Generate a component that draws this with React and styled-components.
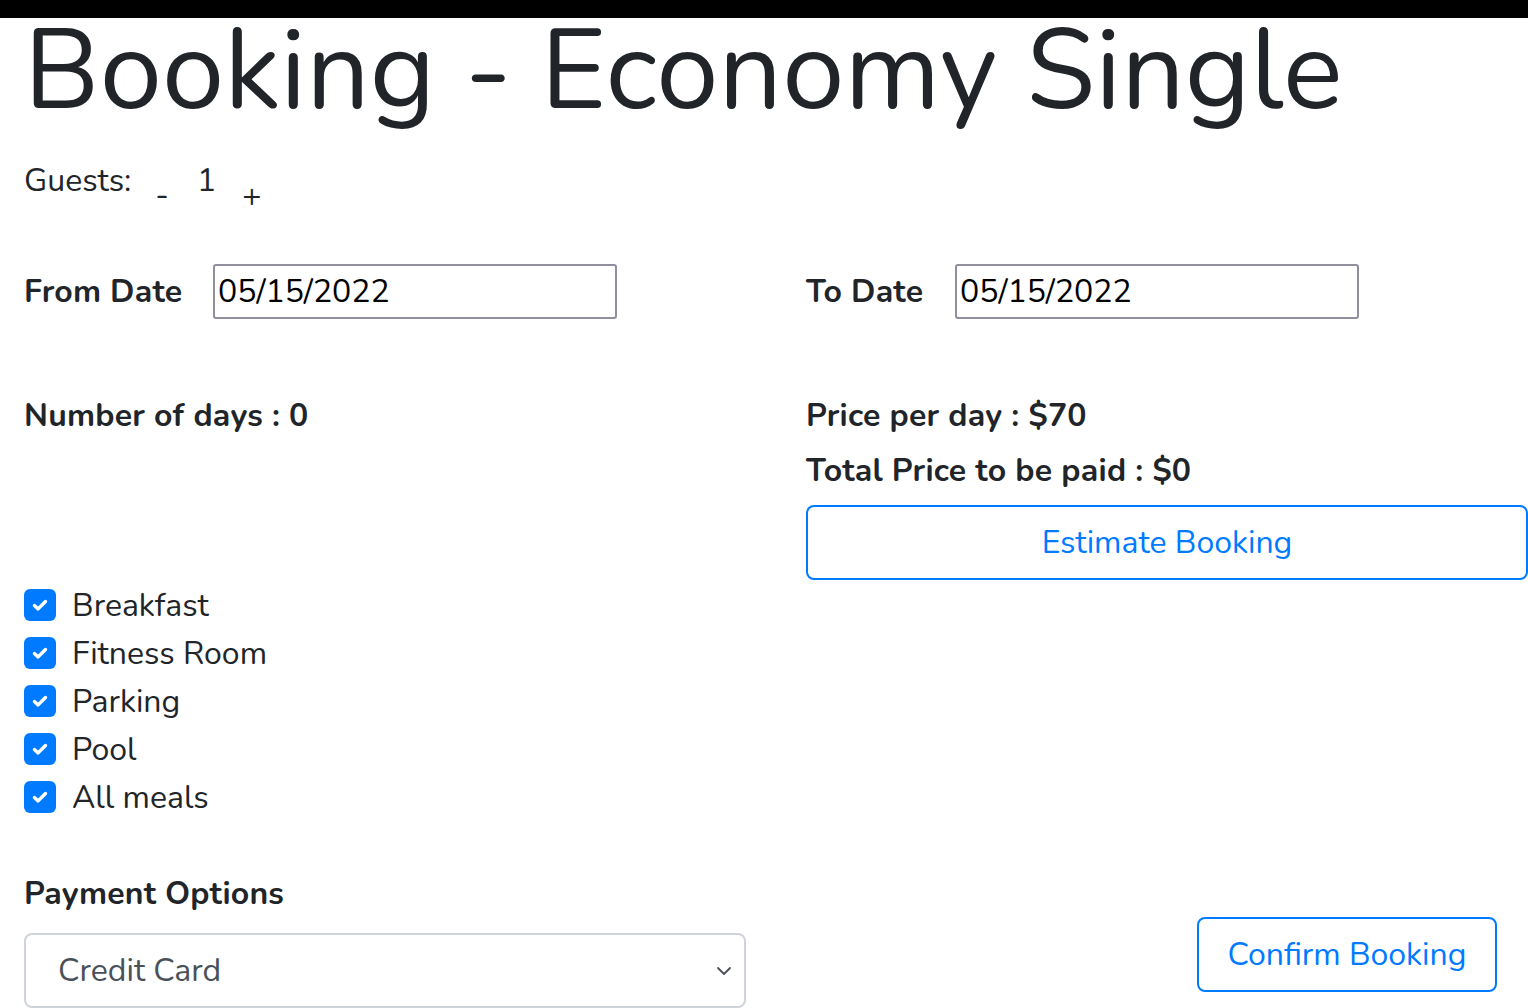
import React from "react";
import styled, { createGlobalStyle } from "styled-components";

const Global = createGlobalStyle`
  html, body { margin: 0; padding: 0; background: #fff; }
  body {
    font-family: "Nunito", "Lato", "Noto Sans", sans-serif;
    font-size: 32px;
    line-height: 48px;
    color: #212529;
    overflow: hidden;
  }
  * { box-sizing: border-box; }
`;

const TopBar = styled.div`
  height: 18px;
  background: #000;
`;

const Page = styled.main`
  padding-left: 24px;
  width: 1528px;
`;

const Title = styled.h1`
  margin: 0;
  font-size: 112px;
  font-weight: 400;
  line-height: 108px;
  white-space: nowrap;
`;

const GuestsRow = styled.div`
  display: flex;
  align-items: flex-start;
  margin-top: 31px;
`;

const Text = styled.span`
  font-weight: 400;
  white-space: nowrap;
`;

const StepButton = styled.button`
  font: inherit;
  color: #212529;
  background: transparent;
  border: none;
  padding: 0 14px;
  margin-top: 15px;
  margin-left: ${(p) => p.$ml || 0}px;
  line-height: 48px;
  cursor: pointer;
`;

const Count = styled.span`
  padding: 0 12px 0 14px;
`;

const TwoCol = styled.div`
  display: grid;
  grid-template-columns: 722px 722px;
  column-gap: 60px;
  margin-top: ${(p) => p.$mt}px;
`;

const Field = styled.div`
  display: flex;
  align-items: flex-start;
`;

const FieldLabel = styled.label`
  width: ${(p) => p.$w}px;
  font-weight: 700;
  line-height: 56px;
  letter-spacing: 0.2px;
  white-space: nowrap;
`;

const DateInput = styled.input`
  width: 404px;
  height: 55px;
  border: 2px solid #8f8f9d;
  border-radius: 3px;
  padding: 0 0 0 3px;
  font: inherit;
  color: #000;
  background: #fff;
`;

const Stack = styled.div`
  display: flex;
  flex-direction: column;
`;

const Line = styled.p`
  margin: 0 0 7px;
  font-weight: 700;
  letter-spacing: 0.25px;
  white-space: nowrap;
`;

const OutlineButton = styled.button`
  font: inherit;
  color: #007bff;
  background: #fff;
  border: 2px solid #007bff;
  border-radius: 8px;
  height: 75px;
  width: ${(p) => p.$w || "100%"};
  padding: 0 28px;
  margin-top: ${(p) => p.$mt || 0}px;
  margin-left: ${(p) => p.$ml || 0}px;
  cursor: pointer;
  white-space: nowrap;
`;

const CheckList = styled.ul`
  list-style: none;
  margin: 1px 0 0;
  padding: 0;
`;

const CheckItem = styled.li`
  display: flex;
  align-items: center;
  height: 48px;
  gap: 16px;
`;

const Box = styled.span`
  display: inline-flex;
  align-items: center;
  justify-content: center;
  width: 32px;
  height: 32px;
  border-radius: 6px;
  background: #007bff;
  flex: none;
`;

const CheckText = styled.span`
  white-space: nowrap;
  padding-top: 2px;
`;

const PaymentRow = styled.div`
  display: grid;
  grid-template-columns: 722px 722px;
  column-gap: 60px;
  margin-top: 49px;
`;

const SectionLabel = styled.div`
  font-weight: 700;
  letter-spacing: 0.2px;
  margin-bottom: 15px;
`;

const SelectWrap = styled.div`
  position: relative;
  width: 722px;
  height: 75px;
`;

const Select = styled.select`
  appearance: none;
  -webkit-appearance: none;
  width: 100%;
  height: 100%;
  border: 2px solid #ced4da;
  border-radius: 8px;
  padding: 0 0 0 32px;
  font: inherit;
  color: #495057;
  background: #fff;
`;

const Chevron = styled.svg`
  position: absolute;
  right: 14px;
  top: 30px;
  pointer-events: none;
`;

const Check = () => (
  <svg width="20" height="20" viewBox="0 0 20 20" fill="none">
    <path d="M4.5 10.5l3.6 3.4L15.5 6.5" stroke="#fff" strokeWidth="3.4" strokeLinecap="round" strokeLinejoin="round" />
  </svg>
);

const extras = ["Breakfast", "Fitness Room", "Parking", "Pool", "All meals"];

export default function App() {
  return (
    <>
      <Global />
      <TopBar />
      <Page>
        <Title>Booking - Economy Single</Title>
        <GuestsRow>
          <Text>Guests:</Text>
          <StepButton $ml={10}>-</StepButton>
          <Count>1</Count>
          <StepButton>+</StepButton>
        </GuestsRow>

        <TwoCol $mt={44}>
          <Field>
            <FieldLabel $w={189}>From Date</FieldLabel>
            <DateInput type="text" defaultValue="05/15/2022" />
          </Field>
          <Field>
            <FieldLabel $w={149}>To Date</FieldLabel>
            <DateInput type="text" defaultValue="05/15/2022" />
          </Field>
        </TwoCol>

        <TwoCol $mt={72}>
          <Stack>
            <Line>Number of days : 0</Line>
          </Stack>
          <Stack>
            <Line>Price per day : $70</Line>
            <Line>Total Price to be paid : $0</Line>
            <OutlineButton $mt={3}>Estimate Booking</OutlineButton>
          </Stack>
        </TwoCol>

        <CheckList>
          {extras.map((e) => (
            <CheckItem key={e}>
              <Box>
                <Check />
              </Box>
              <CheckText>{e}</CheckText>
            </CheckItem>
          ))}
        </CheckList>

        <PaymentRow>
          <Stack>
            <SectionLabel>Payment Options</SectionLabel>
            <SelectWrap>
              <Select defaultValue="cc">
                <option value="cc">Credit Card</option>
                <option value="pp">PayPal</option>
              </Select>
              <Chevron width="16" height="16" viewBox="0 0 16 16" fill="none">
                <path d="M2 5l6 6 6-6" stroke="#495057" strokeWidth="1.8" strokeLinecap="round" strokeLinejoin="round" />
              </Chevron>
            </SelectWrap>
          </Stack>
          <Stack>
            <OutlineButton $w="300px" $mt={47} $ml={391}>
              Confirm Booking
            </OutlineButton>
          </Stack>
        </PaymentRow>
      </Page>
    </>
  );
}
